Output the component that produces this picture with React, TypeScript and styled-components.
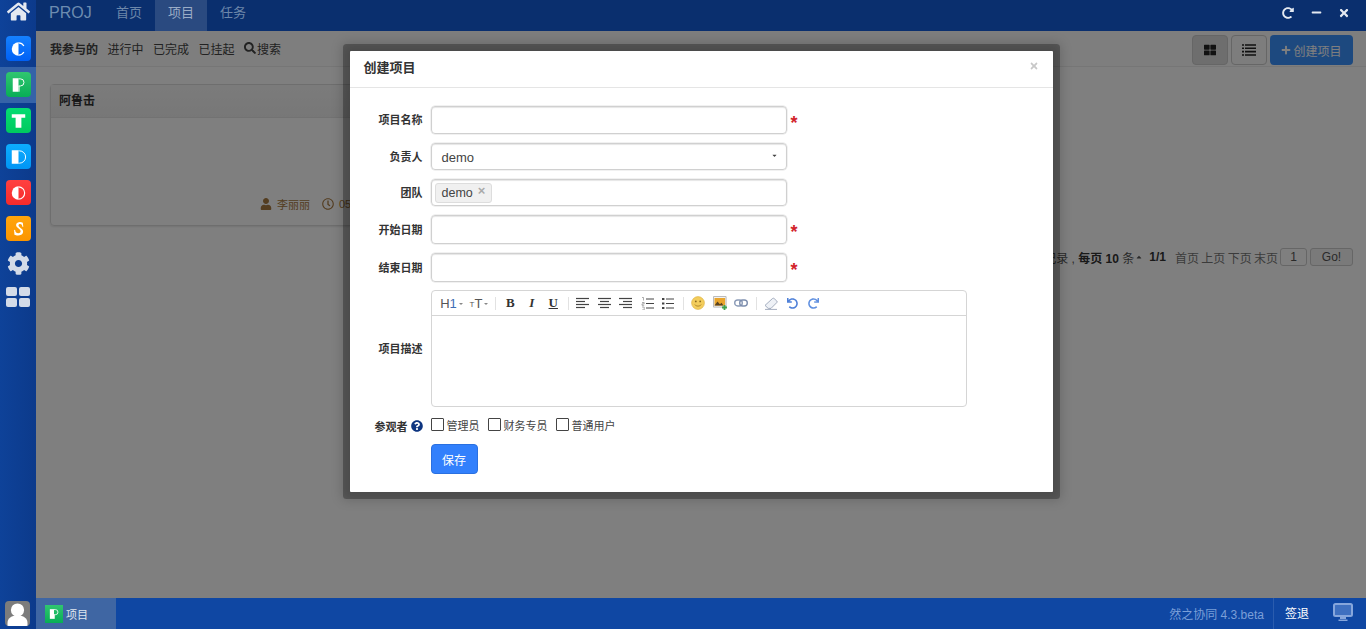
import React from "react";
import styled, { createGlobalStyle } from "styled-components";
import {
  FaHome,
  FaCog,
  FaUser,
  FaRegClock,
  FaSearch,
  FaPlus,
  FaThLarge,
  FaRedoAlt,
  FaMinus,
  FaTimes,
  FaQuestionCircle,
  FaUndo,
  FaRedo,
  FaCaretDown,
  FaCaretUp,
} from "react-icons/fa";

const GlobalStyle = createGlobalStyle`
  html, body {
    margin: 0;
    padding: 0;
    background: #fff;
  }
  body {
    font-family: "Liberation Sans", "Noto Sans CJK SC", sans-serif;
    font-size: 12px;
    color: #333;
  }
`;

type Letter = "C" | "P" | "T" | "D" | "O" | "S";

// half filled app logos, same idea for each product
function LogoMark({ letter }: { letter: Letter }) {
  if (letter === "C" || letter === "O") {
    return (
      <svg width="26" height="26" viewBox="0 0 26 26">
        <path d="M13 6a7 7 0 0 0 0 14z" fill="#fff" />
        <path
          d={letter === "C" ? "M13 6.6a6.4 6.4 0 0 1 5.6 3.2M13 19.4a6.4 6.4 0 0 0 5.6-3.2" : "M13 6.6a6.4 6.4 0 0 1 0 12.8"}
          fill="none"
          stroke="#fff"
          strokeWidth="1.2"
        />
      </svg>
    );
  }
  if (letter === "P") {
    return (
      <svg width="26" height="26" viewBox="0 0 26 26">
        <path d="M7 6h6v14H7z" fill="#fff" />
        <path d="M13 6.6h2a3.6 3.6 0 0 1 0 7.4h-2M13.6 14v6" fill="none" stroke="#fff" strokeWidth="1" />
      </svg>
    );
  }
  if (letter === "T") {
    return (
      <svg width="26" height="26" viewBox="0 0 26 26">
        <path d="M6 6h14v3.6h-4V20h-6V9.6H6z" fill="#fff" />
      </svg>
    );
  }
  if (letter === "D") {
    return (
      <svg width="26" height="26" viewBox="0 0 26 26">
        <path d="M6 6h7v14H6z" fill="#fff" />
        <path d="M13 6.6h1a6.4 6.4 0 0 1 0 12.8h-1" fill="none" stroke="#fff" strokeWidth="1" />
      </svg>
    );
  }
  return (
    <svg width="26" height="26" viewBox="0 0 26 26">
      <path
        d="M17.5 6.5c-2-1.4-6.6-1.2-7 2.2-.4 3.4 5 4 4.7 7-.2 2-3.4 2.2-5.2.4l-.6-2.2-1 .1.4 5c2.4 1.4 8.4 1.4 9-2.8.5-3.6-5-4.4-4.8-7 .2-1.8 2.6-1.6 3.6-.4l.4 1.8h1z"
        fill="#fff"
      />
    </svg>
  );
}

const apps: { letter: Letter; from: string; to: string; active?: boolean }[] = [
  { letter: "C", from: "#1581ff", to: "#0060f5" },
  { letter: "P", from: "#30c670", to: "#08ae56", active: true },
  { letter: "T", from: "#05dc72", to: "#00c95f" },
  { letter: "D", from: "#0dadff", to: "#0095f5" },
  { letter: "O", from: "#ff4040", to: "#f62b2b" },
  { letter: "S", from: "#ffa50d", to: "#fb9500" },
];

export default function App() {
  return (
    <Shell>
      <GlobalStyle />
      <Sidebar>
        <HomeLink>
          <FaHome size={23} />
        </HomeLink>
        {apps.map((a) => (
          <AppRow key={a.letter} $active={a.active}>
            <AppTile $from={a.from} $to={a.to}>
              <LogoMark letter={a.letter} />
            </AppTile>
          </AppRow>
        ))}
        <SideTool>
          <FaCog size={23} />
        </SideTool>
        <Tiles>
          <i />
          <i />
          <i />
          <i />
        </Tiles>
        <Avatar>
          <svg width="25" height="25" viewBox="0 0 25 25">
            <circle cx="12.5" cy="9" r="6.6" fill="#fff" />
            <path d="M2.5 25v-3c0-5 4-7.5 10-7.5s10 2.5 10 7.5v3z" fill="#fff" />
          </svg>
        </Avatar>
      </Sidebar>

      <Main>
        <TopBar>
          <Brand>PROJ</Brand>
          <NavTab>首页</NavTab>
          <NavTab $active>项目</NavTab>
          <NavTab>任务</NavTab>
          <WindowTools>
            <WindowTool>
              <FaRedoAlt size={12} />
            </WindowTool>
            <WindowTool>
              <FaMinus size={11} />
            </WindowTool>
            <WindowTool>
              <FaTimes size={12} />
            </WindowTool>
          </WindowTools>
        </TopBar>

        <Content>
          <SubBar>
            <SubLink $bold>我参与的</SubLink>
            <SubLink>进行中</SubLink>
            <SubLink>已完成</SubLink>
            <SubLink>已挂起</SubLink>
            <SubLink>
              <FaSearch size={12} />
              搜索
            </SubLink>
            <SubActions>
              <ViewButton $active>
                <FaThLarge size={12} />
              </ViewButton>
              <ViewButton>
                <svg width="14" height="12" viewBox="0 0 14 12">
                  <path d="M0 1h2M3 1h11M0 4.3h2M3 4.3h11M0 7.6h2M3 7.6h11M0 11h2M3 11h11" stroke="#222" strokeWidth="1.6" />
                </svg>
              </ViewButton>
              <CreateButton>
                <FaPlus size={10} />
                创建项目
              </CreateButton>
            </SubActions>
          </SubBar>

          <Panel>
            <PanelHead>阿鲁击</PanelHead>
            <PanelFoot>
              <FaUser size={12} />
              <span>李丽丽</span>
              <FaRegClock size={12} />
              <span>05-12</span>
            </PanelFoot>
          </Panel>

          <Pager>
            <span>
              共 <b>1</b> 条记录 , <b>每页 10</b> 条
            </span>
            <PagerCaret>
              <FaCaretUp size={8} />
            </PagerCaret>
            <PagerCount>1/1</PagerCount>
            <PagerLinks>首页 上页 下页 末页</PagerLinks>
            <PagerInput>1</PagerInput>
            <PagerGo>Go!</PagerGo>
          </Pager>

          <Backdrop>
            <Modal>
              <ModalHead>
                <ModalTitle>创建项目</ModalTitle>
                <ModalClose>
                  <FaTimes size={10} />
                </ModalClose>
              </ModalHead>
              <ModalBody>
                <Row $h={28}>
                  <Label>项目名称</Label>
                  <Field />
                  <Star>*</Star>
                </Row>
                <Row $h={27}>
                  <Label>负责人</Label>
                  <Field>
                    <FieldText>demo</FieldText>
                    <SelectCaret>
                      <FaCaretDown size={7} />
                    </SelectCaret>
                  </Field>
                </Row>
                <Row $h={27}>
                  <Label>团队</Label>
                  <Field $chips>
                    <Chip>
                      demo
                      <ChipClose>×</ChipClose>
                    </Chip>
                  </Field>
                </Row>
                <Row $h={29}>
                  <Label>开始日期</Label>
                  <Field />
                  <Star>*</Star>
                </Row>
                <Row $h={29} $gap={8}>
                  <Label>结束日期</Label>
                  <Field />
                  <Star>*</Star>
                </Row>
                <Row $h={117}>
                  <Label>项目描述</Label>
                  <Editor>
                    <EditorBar>
                      <Tool $w={30} $pad={4}>
                        H<BlueText>1</BlueText>
                        <MiniCaret />
                      </Tool>
                      <Tool $w={27} $pad={2}>
                        <SmallT>T</SmallT>T
                        <MiniCaret />
                      </Tool>
                      <Sep />
                      <Tool>
                        <SerifMark>B</SerifMark>
                      </Tool>
                      <Tool>
                        <SerifMark $italic>I</SerifMark>
                      </Tool>
                      <Tool>
                        <SerifMark $under>U</SerifMark>
                      </Tool>
                      <Sep />
                      <Tool>
                        <AlignIcon lines={["M0 1.5h13", "M0 4.5h9", "M0 7.5h13", "M0 10.5h9"]} />
                      </Tool>
                      <Tool>
                        <AlignIcon lines={["M0 1.5h13", "M2 4.5h9", "M0 7.5h13", "M2 10.5h9"]} />
                      </Tool>
                      <Tool>
                        <AlignIcon lines={["M0 1.5h13", "M4 4.5h9", "M0 7.5h13", "M4 10.5h9"]} />
                      </Tool>
                      <Tool>
                        <ListIcon ordered />
                      </Tool>
                      <Tool>
                        <ListIcon />
                      </Tool>
                      <Sep />
                      <Tool>
                        <svg width="14" height="14" viewBox="0 0 14 14">
                          <circle cx="7" cy="7" r="6.4" fill="#f3cd5c" stroke="#dcae3c" strokeWidth=".6" />
                          <circle cx="4.8" cy="5.4" r=".9" fill="#8a6a20" />
                          <circle cx="9.2" cy="5.4" r=".9" fill="#8a6a20" />
                          <path d="M3.8 8.6c1.4 2 5 2 6.4 0" fill="none" stroke="#a87f25" strokeWidth=".9" />
                        </svg>
                      </Tool>
                      <Tool>
                        <svg width="14" height="14" viewBox="0 0 14 14">
                          <path d="M.5.5h12.6v10.6H.5z" fill="#f2f2f2" stroke="#bbb" />
                          <path d="M1.5 2h10.6v7.6H1.5z" fill="#e9a52c" />
                          <path d="M1.5 9.6l3-4 2.4 2.6 1.6-1.4 2 2.8z" fill="#5a4320" />
                          <path d="M9 11.5h5M11.5 9v5" stroke="#3fa34d" strokeWidth="1.8" />
                        </svg>
                      </Tool>
                      <Tool>
                        <svg width="14" height="10" viewBox="0 0 14 10">
                          <rect x=".7" y="2" width="7.6" height="6" rx="3" fill="none" stroke="#8c9cb8" strokeWidth="1.4" />
                          <rect x="5.7" y="2" width="7.6" height="6" rx="3" fill="none" stroke="#7d8eae" strokeWidth="1.4" />
                        </svg>
                      </Tool>
                      <Sep />
                      <Tool>
                        <svg width="14" height="14" viewBox="0 0 14 14">
                          <path d="M1 9.4L8.4 2.6c.6-.5 1.3-.5 1.8 0l2.6 2.4c.5.5.5 1.1 0 1.6L7 12.4H4.2z" fill="#eef1f6" stroke="#8f9ab0" strokeWidth=".8" />
                          <path d="M1 13.4h12" stroke="#9aa4b8" strokeWidth=".9" />
                        </svg>
                      </Tool>
                      <Tool $color="#4f80d8">
                        <FaUndo size={11} />
                      </Tool>
                      <Tool $color="#6090e0">
                        <FaRedo size={11} />
                      </Tool>
                    </EditorBar>
                  </Editor>
                </Row>
                <ViewersRow>
                  <Label>
                    参观者
                    <HelpIcon>
                      <FaQuestionCircle size={12} />
                    </HelpIcon>
                  </Label>
                  <CheckGroup>
                    <Check>
                      <Box type="checkbox" />
                      <span>管理员</span>
                    </Check>
                    <Check>
                      <Box type="checkbox" />
                      <span>财务专员</span>
                    </Check>
                    <Check>
                      <Box type="checkbox" />
                      <span>普通用户</span>
                    </Check>
                  </CheckGroup>
                </ViewersRow>
                <SaveButton>保存</SaveButton>
              </ModalBody>
            </Modal>
          </Backdrop>
        </Content>

        <BottomBar>
          <TaskTab>
            <TaskIcon>
              <svg width="18" height="18" viewBox="0 0 26 26">
                <path d="M7 6h6v14H7z" fill="#fff" />
                <path d="M13 6.6h2a3.6 3.6 0 0 1 0 7.4h-2M13.6 14v6" fill="none" stroke="#fff" strokeWidth="1.2" />
              </svg>
            </TaskIcon>
            项目
          </TaskTab>
          <Version>然之协同 4.3.beta</Version>
          <Logout>签退</Logout>
          <ScreenIcon>
            <svg width="20" height="18" viewBox="0 0 20 18">
              <rect x="1" y="1" width="18" height="12" rx="1.5" fill="#3f70c0" stroke="#86a6dc" strokeWidth="2" />
              <path d="M7 14h6v2H7z" fill="#86a6dc" />
              <path d="M5.5 16.5h9V18h-9z" fill="#86a6dc" />
            </svg>
          </ScreenIcon>
        </BottomBar>
      </Main>
    </Shell>
  );
}

function AlignIcon({ lines }: { lines: string[] }) {
  return (
    <svg width="13" height="12" viewBox="0 0 13 12">
      {lines.map((d) => (
        <path key={d} d={d} stroke="#444" strokeWidth="1.2" />
      ))}
    </svg>
  );
}

function ListIcon({ ordered }: { ordered?: boolean }) {
  const x = ordered ? "M5 " : "M4 ";
  return (
    <svg width="13" height="13" viewBox="0 0 13 13">
      <path d={x + "2h8"} stroke="#444" />
      <path d={x + "6.5h8"} stroke="#444" />
      <path d={x + "11h8"} stroke="#444" />
      {ordered ? (
        <path d="M1 .5h1.5v3M1 5.5h2.2v1.4H1v1.4h2.2M1 10h2.2v3H1" fill="none" stroke="#777" strokeWidth=".6" />
      ) : (
        <path d="M0 2h2.4M0 6.5h2.4M0 11h2.4" stroke="#444" strokeWidth="2.2" />
      )}
    </svg>
  );
}

const Shell = styled.div`
  width: 1366px;
  height: 629px;
  display: flex;
  overflow: hidden;
`;

const Sidebar = styled.nav`
  width: 36px;
  flex: none;
  display: flex;
  flex-direction: column;
  background: linear-gradient(90deg, #0e4299, #0c3a8b);
`;

const HomeLink = styled.div`
  height: 31px;
  display: flex;
  justify-content: center;
  align-items: flex-start;
  color: #e4e9f1;
`;

const AppRow = styled.div<{ $active?: boolean }>`
  height: 36px;
  box-sizing: border-box;
  padding-top: 5px;
  display: flex;
  justify-content: center;
  background: ${(p) => (p.$active ? "#3563a8" : "transparent")};
`;

const AppTile = styled.div<{ $from: string; $to: string }>`
  width: 25px;
  height: 25px;
  border-radius: 4px;
  overflow: hidden;
  display: flex;
  align-items: center;
  justify-content: center;
  background: linear-gradient(${(p) => p.$from}, ${(p) => p.$to});
`;

const SideTool = styled.div`
  height: 36px;
  margin-top: -2px;
  display: flex;
  align-items: center;
  justify-content: center;
  color: #d3dbe8;
`;

const Tiles = styled.div`
  width: 24px;
  margin: 6px auto 0;
  display: grid;
  grid-template-columns: 1fr 1fr;
  gap: 2px;
  i {
    display: block;
    height: 9px;
    border-radius: 2px;
    background: #d3dbe8;
  }
`;

const Avatar = styled.div`
  width: 25px;
  height: 25px;
  margin: auto 0 3px 5px;
  border-radius: 4px;
  overflow: hidden;
  background: #7c7c7c;
`;

const Main = styled.div`
  flex: 1;
  min-width: 0;
  display: flex;
  flex-direction: column;
`;

const TopBar = styled.header`
  height: 31px;
  flex: none;
  display: flex;
  background: #0a2f6e;
`;

const Brand = styled.div`
  width: 54px;
  padding-left: 13px;
  line-height: 25px;
  font-size: 16px;
  color: #6d8cb0;
`;

const NavTab = styled.div<{ $active?: boolean }>`
  padding: 0 13px;
  line-height: 25px;
  font-size: 13px;
  color: ${(p) => (p.$active ? "#9badc6" : "#6d87aa")};
  background: ${(p) => (p.$active ? "#2a4a80" : "transparent")};
`;

const WindowTools = styled.div`
  margin-left: auto;
  display: flex;
  padding-right: 8px;
`;

const WindowTool = styled.div`
  width: 28px;
  display: flex;
  align-items: center;
  justify-content: center;
  color: #e4e9f1;
  padding-bottom: 6px;
`;

const Content = styled.main`
  flex: 1;
  position: relative;
  background: #fff;
`;

const SubBar = styled.div`
  height: 36px;
  box-sizing: border-box;
  padding: 0 13px 1px 14px;
  display: flex;
  align-items: center;
  gap: 9.5px;
  background: #fcfcfc;
  border-bottom: 1px solid #ececec;
`;

const SubLink = styled.a<{ $bold?: boolean }>`
  display: flex;
  align-items: center;
  gap: 1px;
  font-weight: ${(p) => (p.$bold ? 700 : 400)};
  color: #444;
`;

const SubActions = styled.div`
  margin: 4px 0 0 auto;
  display: flex;
  gap: 3px;
`;

const ViewButton = styled.div<{ $active?: boolean }>`
  width: 36px;
  height: 30px;
  box-sizing: border-box;
  display: flex;
  align-items: center;
  justify-content: center;
  border: 1px solid #ccc;
  border-radius: 4px;
  color: #222;
  background: ${(p) => (p.$active ? "#dcdcdc" : "#fafafa")};
`;

const CreateButton = styled.div`
  width: 83px;
  height: 30px;
  display: flex;
  align-items: center;
  justify-content: center;
  gap: 2px;
  border-radius: 4px;
  color: #fff;
  background: #3a92ff;
`;

const Panel = styled.section`
  width: 800px;
  height: 142px;
  box-sizing: border-box;
  margin: 17px 0 0 14px;
  border: 1px solid #ddd;
  border-radius: 4px;
  box-shadow: 0 1px 2px rgba(0, 0, 0, 0.1);
  display: flex;
  flex-direction: column;
`;

const PanelHead = styled.div`
  height: 32px;
  padding-left: 8px;
  line-height: 32px;
  font-weight: 700;
  color: #333;
  background: linear-gradient(#f7f7f7, #efefef);
  border-bottom: 1px solid #e5e5e5;
`;

const PanelFoot = styled.div`
  margin-top: auto;
  padding: 0 0 13px 209px;
  display: flex;
  align-items: center;
  gap: 5px;
  font-size: 11px;
  color: #a87a40;
  span {
    margin-right: 7px;
  }
`;

const Pager = styled.div`
  margin: 22px 13px 0 0;
  display: flex;
  justify-content: flex-end;
  align-items: center;
  height: 18px;
  color: #555;
  b {
    color: #333;
  }
`;

const PagerCaret = styled.span`
  display: flex;
  margin: 0 6px 0 1px;
`;

const PagerCount = styled.b`
  margin-right: 9px;
`;

const PagerLinks = styled.span`
  margin-right: 2px;
  word-spacing: -1px;
  color: #777;
`;

const PagerInput = styled.div`
  width: 27px;
  height: 18px;
  box-sizing: border-box;
  border: 1px solid #ccc;
  border-radius: 3px;
  text-align: center;
  line-height: 16px;
  background: #fff;
`;

const PagerGo = styled.div`
  width: 43px;
  height: 18px;
  box-sizing: border-box;
  margin-left: 3px;
  border: 1px solid #ccc;
  border-radius: 3px;
  text-align: center;
  line-height: 16px;
  background: #f4f4f4;
`;

const Backdrop = styled.div`
  position: absolute;
  inset: 0;
  display: flex;
  justify-content: center;
  align-items: flex-start;
  background: rgba(0, 0, 0, 0.5);
`;

const Modal = styled.div`
  width: 703px;
  margin-top: 20px;
  background: #fff;
  box-shadow: 0 0 0 7px rgba(0, 0, 0, 0.28), 0 0 12px 8px rgba(0, 0, 0, 0.18);
  border-radius: 1px;
`;

const ModalHead = styled.div`
  height: 37px;
  box-sizing: border-box;
  padding: 0 14px 6px;
  display: flex;
  align-items: center;
  justify-content: space-between;
  border-bottom: 1px solid #e5e5e5;
`;

const ModalTitle = styled.div`
  font-size: 13px;
  font-weight: 700;
  color: #333;
`;

const ModalClose = styled.div`
  display: flex;
  margin-top: -1px;
  color: #c8c8c8;
`;

const ModalBody = styled.div`
  padding: 18px 0;
`;

const Row = styled.div<{ $h: number; $gap?: number }>`
  height: ${(p) => p.$h}px;
  margin-bottom: ${(p) => p.$gap ?? 9}px;
  display: flex;
  align-items: center;
`;

const Label = styled.label`
  width: 73px;
  margin-right: 8px;
  padding-bottom: 2px;
  flex: none;
  display: flex;
  justify-content: flex-end;
  align-items: center;
  font-size: 11px;
  font-weight: 700;
  color: #333;
`;

const Field = styled.div<{ $chips?: boolean }>`
  position: relative;
  width: 356px;
  height: 100%;
  box-sizing: border-box;
  display: flex;
  align-items: center;
  padding-left: ${(p) => (p.$chips ? "3px" : "10px")};
  border: 1px solid #d0d0d0;
  border-radius: 4px;
  box-shadow: inset 0 1px 1px rgba(0, 0, 0, 0.1), 0 0 0 0.5px #e4e4e4;
  font-size: 13px;
  color: #444;
`;

const FieldText = styled.span`
  margin-top: 1px;
`;

const SelectCaret = styled.span`
  position: absolute;
  right: 8px;
  top: 8px;
  display: flex;
  color: #444;
`;

const Star = styled.span`
  margin: 5px 0 0 4px;
  font-size: 18px;
  font-weight: 700;
  line-height: 18px;
  color: #d2232a;
`;

const Chip = styled.span`
  height: 18px;
  padding: 0 6px;
  display: flex;
  align-items: center;
  gap: 5px;
  border: 1px solid #ddd;
  border-radius: 3px;
  background: #f0f0f0;
  font-size: 12.5px;
`;

const ChipClose = styled.span`
  margin-top: -4px;
  font-size: 13px;
  font-weight: 700;
  color: #aaa;
`;

const Editor = styled.div`
  width: 536px;
  height: 100%;
  box-sizing: border-box;
  border: 1px solid #d5d5d5;
  border-radius: 4px;
`;

const EditorBar = styled.div`
  height: 24px;
  padding-left: 3px;
  display: flex;
  align-items: center;
  border-bottom: 1px solid #d5d5d5;
`;

const Tool = styled.span<{ $w?: number; $color?: string; $pad?: number }>`
  width: ${(p) => p.$w ?? 21.5}px;
  flex: none;
  box-sizing: border-box;
  padding-left: ${(p) => p.$pad ?? 0}px;
  display: flex;
  align-items: center;
  justify-content: center;
  font-size: 13px;
  color: ${(p) => p.$color ?? "#555"};
`;

const BlueText = styled.span`
  color: #3e6fb5;
`;

const SmallT = styled.span`
  margin-top: 3px;
  font-size: 8px;
`;

const MiniCaret = styled.i`
  margin: 2px 0 0 2px;
  border: 2px solid transparent;
  border-top: 2.5px solid #888;
  border-bottom: 0;
`;

const SerifMark = styled.span<{ $italic?: boolean; $under?: boolean }>`
  font-family: "Liberation Serif", serif;
  font-size: 13px;
  font-weight: 700;
  color: #333;
  font-style: ${(p) => (p.$italic ? "italic" : "normal")};
  text-decoration: ${(p) => (p.$under ? "underline" : "none")};
`;

const Sep = styled.span`
  width: 1px;
  height: 13px;
  flex: none;
  margin: 0 3.5px;
  background: #e2e2e2;
`;

const ViewersRow = styled.div`
  height: 14px;
  margin: 13px 0 10px;
  display: flex;
  align-items: center;
`;

const HelpIcon = styled.span`
  display: flex;
  margin-left: 3px;
  color: #0d3580;
`;

const CheckGroup = styled.div`
  display: flex;
  gap: 8px;
  margin-top: -4px;
`;

const Check = styled.label`
  display: flex;
  align-items: flex-start;
  gap: 3px;
  font-size: 11px;
  line-height: 14px;
  color: #444;
  span {
    margin-top: 1px;
  }
`;

const Box = styled.input`
  appearance: none;
  width: 13px;
  height: 13px;
  margin: 0;
  box-sizing: border-box;
  border: 1px solid #444;
  border-radius: 1px;
  background: #fff;
`;

const SaveButton = styled.button`
  display: block;
  width: 47px;
  height: 30px;
  margin-left: 81px;
  padding: 0;
  border: 1px solid #2a70e0;
  border-radius: 4px;
  background: #3280fc;
  color: #fff;
  font: inherit;
`;

const BottomBar = styled.footer`
  height: 31px;
  flex: none;
  display: flex;
  align-items: center;
  background: #0f47a3;
`;

const TaskTab = styled.div`
  width: 80px;
  height: 100%;
  box-sizing: border-box;
  padding-left: 9px;
  display: flex;
  align-items: center;
  gap: 3px;
  font-size: 11px;
  color: #dfe6f0;
  background: #3f66a3;
`;

const TaskIcon = styled.span`
  width: 18px;
  height: 18px;
  display: flex;
  background: linear-gradient(#30c670, #08ae56);
`;

const Version = styled.div`
  margin-left: auto;
  padding-right: 9px;
  color: #7b9fd8;
`;

const Logout = styled.div`
  height: 100%;
  box-sizing: border-box;
  padding: 0 11px 3px;
  display: flex;
  align-items: center;
  color: #fff;
  border-left: 1px solid #2a5cae;
`;

const ScreenIcon = styled.div`
  width: 46px;
  display: flex;
  justify-content: center;
  padding-bottom: 4px;
`;
